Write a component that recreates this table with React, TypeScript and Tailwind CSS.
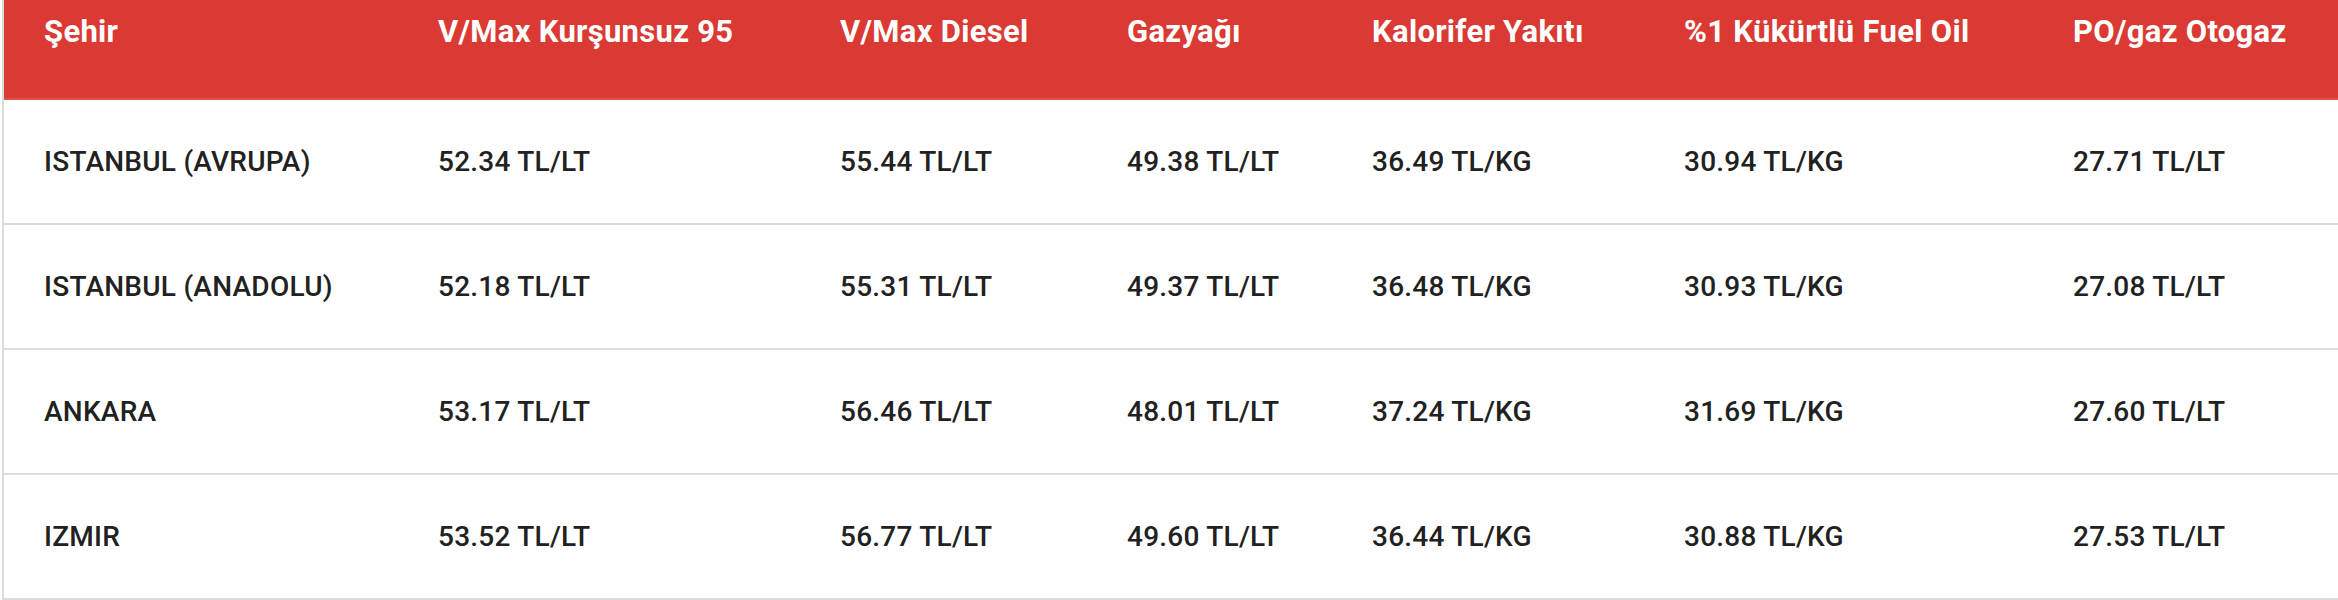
const columns = [
  { label: "Şehir", width: "w-[434px]", pad: "pl-[40px]" },
  { label: "V/Max Kurşunsuz 95", width: "w-[402px]", pad: "" },
  { label: "V/Max Diesel", width: "w-[287px]", pad: "" },
  { label: "Gazyağı", width: "w-[245px]", pad: "" },
  { label: "Kalorifer Yakıtı", width: "w-[312px]", pad: "" },
  { label: "%1 Kükürtlü Fuel Oil", width: "w-[389px]", pad: "" },
  { label: "PO/gaz Otogaz", width: "w-[265px]", pad: "" },
];

const rows = [
  ["ISTANBUL (AVRUPA)", "52.34 TL/LT", "55.44 TL/LT", "49.38 TL/LT", "36.49 TL/KG", "30.94 TL/KG", "27.71 TL/LT"],
  ["ISTANBUL (ANADOLU)", "52.18 TL/LT", "55.31 TL/LT", "49.37 TL/LT", "36.48 TL/KG", "30.93 TL/KG", "27.08 TL/LT"],
  ["ANKARA", "53.17 TL/LT", "56.46 TL/LT", "48.01 TL/LT", "37.24 TL/KG", "31.69 TL/KG", "27.60 TL/LT"],
  ["IZMIR", "53.52 TL/LT", "56.77 TL/LT", "49.60 TL/LT", "36.44 TL/KG", "30.88 TL/KG", "27.53 TL/LT"],
];

function FuelPriceTable() {
  return (
    <div className="ml-[2px] border-l-2 border-[#dcdcdc]">
      <table className="table-fixed border-collapse font-['Roboto',sans-serif]">
        <thead>
          <tr className="h-[99px] bg-[#da3a33] border-b-2 border-[#e0504a]">
            {columns.map((col) => (
              <th
                key={col.label}
                className={`${col.width} ${col.pad} pt-[10px] align-top text-left text-[31px] font-bold tracking-[0.3px] leading-[44px] text-white whitespace-nowrap`}
              >
                {col.label}
              </th>
            ))}
          </tr>
        </thead>
        <tbody>
          {rows.map((row) => (
            <tr key={row[0]} className="h-[125px] border-b-2 border-[#dcdcdc]">
              {row.map((cell, i) => (
                <td
                  key={i}
                  className={`${columns[i].pad} align-middle text-[28px] font-medium tracking-[0.25px] text-[#212121] whitespace-nowrap`}
                >
                  {cell}
                </td>
              ))}
            </tr>
          ))}
        </tbody>
      </table>
    </div>
  );
}

export default function App() {
  return (
    <div className="w-[2338px] h-[600px] overflow-hidden bg-white">
      <FuelPriceTable />
    </div>
  );
}
